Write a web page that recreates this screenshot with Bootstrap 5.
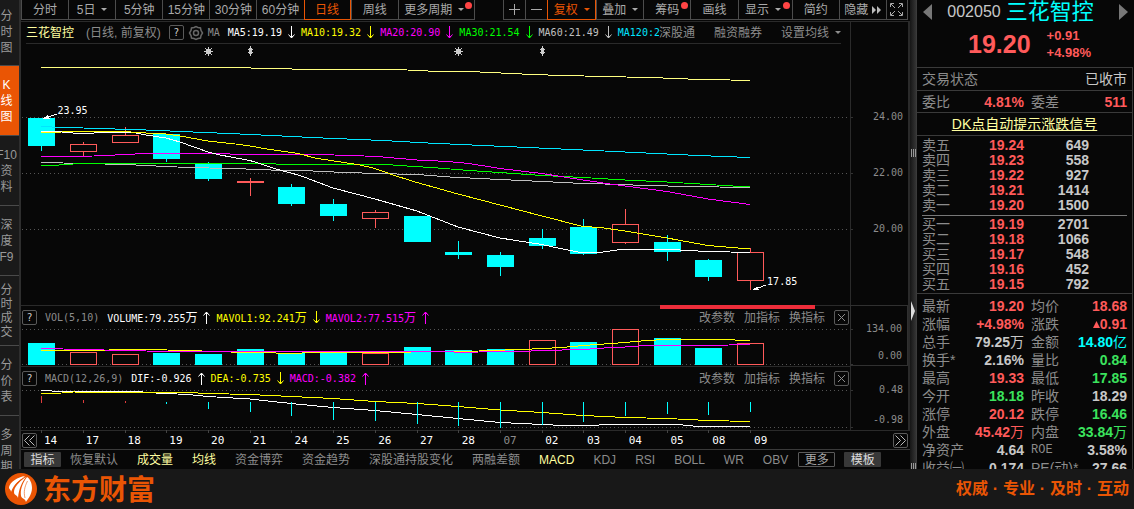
<!DOCTYPE html>
<html lang="zh-CN">
<head>
<meta charset="utf-8">
<meta name="viewport" content="width=device-width, initial-scale=1">
<title>三花智控 002050</title>
<link rel="stylesheet" href="https://cdn.jsdelivr.net/npm/bootstrap@5.3.0/dist/css/bootstrap.min.css">
<style>
:root{--ink:#070707;--line:#3a3a3a;--dim:#8c8c8c;--hot:#ea5504;--up:#ff5a5a;--down:#3be35d;--aqua:#00ffff;--pale:#ffffa0}
body{background:var(--ink);color:#c8c8c8;font-family:"Liberation Sans","Noto Sans CJK SC",sans-serif;font-size:12px;line-height:1}
.app{height:100vh}
button{background:none;border:0;padding:0;color:inherit;font:inherit;line-height:1;white-space:nowrap}
a{color:inherit}
svg{display:block;flex:none}
.mono{font-family:"DejaVu Sans Mono","Noto Sans CJK SC",monospace;font-size:10px}
.mono b{font-size:12px;font-weight:400}
.dim{color:var(--dim)}.up{color:var(--up)}.down{color:var(--down)}.aqua{color:var(--aqua)}.pale{color:var(--pale)}
.yel{color:#ff0}.mag{color:#f0f}.grn{color:#0f0}.wht{color:#fff}.gry{color:#c0c0c0}.cy2{color:#00e5ff}
/* left rail */
.rail{width:21px;background:#1a1a1a;border-right:2px solid #2e2e2e;color:#999}
.rail button{height:70px;border-bottom:1px solid #4a4a4a;padding-right:6px;line-height:16px;display:flex;flex:none;align-items:center;justify-content:center}
.rail button:first-child{height:66px;padding-bottom:2px}
.rail button.tight{line-height:14px}
.rail .on{background:var(--hot);color:#fff}
/* period bar */
.bar{height:20px;margin-bottom:1px;padding-right:2px}
.bar button{flex:1 1 47px;border:solid #4c4c4c;border-width:0 0 1px 1px;color:#aaa;display:flex;align-items:center;justify-content:center;position:relative}
.bar button.last{border-right-width:1px}
.bar button.on{border-color:var(--hot);border-right-width:1px;color:var(--hot)}
.bar button.g22{flex-basis:22px}.bar button.g49{flex-basis:49px}.bar button.g54{flex-basis:54px}.bar button.g77{flex-basis:77px}
.bar .g28{flex:1 1 28px}
.caret{border:3px solid transparent;border-top-color:currentColor;border-bottom:0;margin-left:6px}
.dot{position:absolute;right:2px;top:2px;width:7px;height:7px;border-radius:50%;background:#f44}
/* chart frames */
.frame{border-top:1px solid #2a2a2a;border-right:2px solid #2a2a2a}
.legend{margin:0 9px 0 5px;border-bottom:1px solid #2a2a2a}
.legend-space{height:22px}
.gap19{gap:19px}
.gap9{gap:9px;padding-right:1px}
.series{display:flex;align-items:center;gap:5px;margin-right:5px;flex:none}
.qbox{width:15px;height:15px;border:1px solid #5a5a5a;border-radius:2px;display:flex;align-items:center;justify-content:center;flex:none;color:#ccc}
.panel-top{height:24px;border-top:1px solid #2a2a2a;padding-left:1px}
.plot{position:relative;min-height:0}
.plot svg.draw{position:absolute;left:0;top:0;width:100%;height:100%;overflow:visible}
.h37{height:37px}.h40{height:40px}
.scale{width:58px;border-left:1px solid #2a2a2a;position:relative;color:var(--dim)}
.scale.boxed{border:1px solid #303030}
.scale span{position:absolute;right:5px;transform:translateY(-50%);white-space:nowrap}
.note{position:absolute;color:#fff;transform:translateY(-50%)}
.marker-bar{position:absolute;height:4px;background:#ed2d3a;z-index:2}
.dates{height:19px;border-top:1px solid #2a2a2a;padding:0 2px 0 1px}
.dates .run{flex:757 1 0;padding-left:7px;font-size:11px;color:#fff}
.dates .run span{flex:1 1 0}
.dates .rest{flex:98 1 0}
.tabs{height:20px;border-top:1px solid #3a3a3a;gap:19px;padding-left:3px;color:var(--dim)}
.pill{background:#383838;color:#ddd;height:15px;width:37px;border-radius:1px;margin-right:-10px}
.pill.out{background:none;border:1px solid #5a5a5a;color:#aaa;margin-left:-9px}
/* splitter */
.split{width:6px;background:linear-gradient(90deg,#161616,#343434)}
.grip{position:absolute;left:1px;top:149px;width:5px;height:8px;background:repeating-linear-gradient(90deg,#999 0 1px,transparent 1px 2px)}
.grip.low{top:463px}
.knob{position:absolute;left:1px;top:301px;border:solid transparent;border-width:10px 0 10px 4px;border-left-color:#ddd}
/* quote column */
.quote{width:218px;border-left:1px solid var(--line);font-size:14px}
.quote .code{font-size:16px;margin-right:5px}
.quote .name{font-size:22px}
.quote .price{font-size:25px;font-weight:700}
.quote .delta{font-size:13px;font-weight:700;line-height:17px}
.headbox{height:67px;padding:1px 6px 0 6px}
.ident{padding-right:10px}
.body-r{border-right:1px solid var(--line);margin-right:1px}
.qrow{border-top:1px solid var(--line);padding:0 5px;height:23px}
.qrow.h22{height:22px}
.half{width:102px;margin-right:7px}
.val{font-weight:700}
.quote table{width:100%;table-layout:fixed;border-collapse:collapse}
.quote th{font-weight:400;color:var(--dim);text-align:left;padding:0 0 0 5px;white-space:nowrap}
.quote td + th{padding-left:7px}
.quote td{font-weight:700;text-align:right;padding:0;white-space:nowrap}
.book tr{height:15px}.stats tr{height:18px}
.book-wrap{border-top:1px solid var(--line);padding:1px 0 2px}
.mid{border-top:1px solid #777;margin:3px 5px 0;height:1px}
.stats{border-top:1px solid var(--line);padding-top:3px}
.c1{width:48px}.c2{width:59px}.c3{width:65px}
.s1{width:46px}.s2{width:61px}.s3{width:46px}.s4{width:57px}
.quote th.roe{font-family:"Liberation Mono",monospace;font-size:12px}
.foot{height:40px;background:#181818;color:var(--hot);padding:0 5px;position:relative;z-index:3}
.foot .brand{font-size:28px;font-weight:700;margin-left:6px;padding-top:4px}
.foot .motto{font-size:16px;font-weight:700}
.foot .motto i{font-style:normal;display:inline-block;width:15px;text-align:center}
</style>
</head>
<body>
<svg width="0" height="0" class="position-absolute" aria-hidden="true">
  <symbol id="dn" viewBox="0 0 9 13"><path d="M4.500 0V12M1.500 8.500L4.500 12L7.500 8.500M3 10.500H6" fill="none" stroke="currentColor"/></symbol>
  <symbol id="ua" viewBox="0 0 9 13"><path d="M4.500 13V1M1.500 4.500L4.500 1L7.500 4.500M3 2.500H6" fill="none" stroke="currentColor"/></symbol>
</svg>
<div class="app d-flex flex-column overflow-hidden">
  <main class="d-flex flex-fill overflow-hidden" style="min-height:0">
    <nav class="rail d-flex flex-column flex-shrink-0 overflow-hidden">
      <button>分<br>时<br>图</button>
      <button class="on">K<br>线<br>图</button>
      <button>F10<br>资<br>料</button>
      <button>深<br>度<br>F9</button>
      <button class="tight">分<br>时<br>成<br>交</button>
      <button>分<br>价<br>表</button>
      <button>多<br>周<br>期</button>
    </nav>

    <section class="d-flex flex-column flex-fill" style="min-width:0">
      <div class="bar d-flex">
        <button>分时</button><button>5日<span class="caret"></span></button><button>5分钟</button><button>15分钟</button><button>30分钟</button><button>60分钟</button><button class="on">日线</button><button>周线</button>
        <button class="g77 last">更多周期<span class="caret me-1"></span><span class="dot"></span></button>
        <div class="g28"></div>
        <button class="g22" aria-label="放大"><svg width="11" height="11"><path d="M0 5.500H11M5.500 0V11" stroke="#aaa"/></svg></button>
        <button class="g22" aria-label="缩小"><svg width="11" height="11"><path d="M0 5.500H11" stroke="#aaa"/></svg></button>
        <button class="g49 on">复权<span class="caret"></span></button>
        <button>叠加<span class="caret"></span></button>
        <button>筹码<span class="dot"></span></button>
        <button>画线</button>
        <button class="g54">显示<span class="caret me-1"></span><span class="dot"></span></button>
        <button>简约</button>
        <button>隐藏<svg class="ms-1" width="9" height="8"><path d="M0 0L4 4L0 8ZM5 0L9 4L5 8Z" fill="#bbb"/></svg></button>
        <button class="g22 last" aria-label="全屏"><svg width="13" height="13"><path d="M.5 4V.5H4M9 .5H12.500V4M12.500 9V12.500H9M4 12.500H.5V9M1 1L5 5M12 1L8 5M12 12L8 8M1 12L5 8" fill="none" stroke="#aaa"/></svg></button>
      </div>

      <div class="frame d-flex flex-fill" style="min-height:0">
        <div class="d-flex flex-column flex-fill" style="min-width:0">
          <div class="legend legend-space d-flex align-items-center">
            <div class="d-flex align-items-center flex-fill overflow-hidden text-nowrap" style="min-width:0">
              <span class="pale flex-shrink-0 me-2">三花智控</span>
              <span class="dim flex-shrink-0 ms-1 me-1">(日线, 前复权)</span>
              <button class="qbox mono ms-1">?</button>
              <svg class="mx-1" width="16" height="16" viewBox="0 0 16 16" fill="none" stroke="#666" stroke-width="1.500"><path d="M6 2.500L8 1.500L10 2.500L12.500 3L13 5.500L14.500 8L13 10.500L12.500 13L10 13.500L8 14.500L6 13.500L3.500 13L3 10.500L1.500 8L3 5.500L3.500 3Z"/><circle cx="8" cy="8" r="2.500"/></svg>
              <span class="mono dim me-2 flex-shrink-0">MA</span>
              <span class="series mono wht">MA5:19.19<svg width="9" height="13"><use href="#dn"/></svg></span>
              <span class="series mono yel">MA10:19.32<svg width="9" height="13"><use href="#dn"/></svg></span>
              <span class="series mono mag">MA20:20.90<svg width="9" height="13"><use href="#dn"/></svg></span>
              <span class="series mono grn">MA30:21.54<svg width="9" height="13"><use href="#dn"/></svg></span>
              <span class="series mono gry">MA60:21.49<svg width="9" height="13"><use href="#dn"/></svg></span>
              <span class="series mono cy2">MA120:2</span>
            </div>
            <div class="d-flex gap19 dim flex-shrink-0"><button>深股通</button><button>融资融券</button><button class="d-flex align-items-center">设置均线<span class="caret"></span></button></div>
          </div>
          <div class="plot flex-fill">
            <svg class="draw" id="price" viewBox="21 44 829 261" preserveAspectRatio="none"></svg>
            <span class="note mono" style="left:4.4%;top:25.600%">23.95</span>
            <span class="note mono" style="left:90%;top:91.200%">17.85</span>
            <div class="marker-bar" style="left:77.100%;width:18.700%;top:100%"></div>
          </div>
        </div>
        <div class="d-flex flex-column"><div class="scale legend-space"></div><div class="scale mono flex-fill" data-top="44" data-h="261" data-ticks="24.00@117,22.00@173,20.00@229"></div></div>
      </div>

      <div class="d-flex frame border-top-0">
        <div class="flex-fill" style="min-width:0">
          <div class="panel-top d-flex align-items-center">
            <button class="qbox mono me-1">?</button>
            <span class="mono dim ms-1 me-2">VOL(5,10)</span>
            <span class="series mono wht"><span>VOLUME:79.255<b>万</b></span><svg width="9" height="13"><use href="#ua"/></svg></span>
            <span class="series mono yel"><span>MAVOL1:92.241<b>万</b></span><svg width="9" height="13"><use href="#dn"/></svg></span>
            <span class="series mono mag"><span>MAVOL2:77.515<b>万</b></span><svg width="9" height="13"><use href="#ua"/></svg></span>
            <div class="d-flex align-items-center dim gap9 ms-auto"><button>改参数</button><button>加指标</button><button>换指标</button><button class="qbox" aria-label="关闭"><svg width="9" height="9"><path d="M1 1L8 8M8 1L1 8" stroke="#8c8c8c"/></svg></button></div>
          </div>
          <div class="plot h37"><svg class="draw" id="vol" viewBox="21 329 829 37" preserveAspectRatio="none"></svg></div>
        </div>
        <div class="scale boxed mono" data-top="305" data-h="61" data-ticks="134.00@329,0.00@357"></div>
      </div>

      <div class="d-flex frame border-top-0">
        <div class="flex-fill" style="min-width:0">
          <div class="panel-top d-flex align-items-center">
            <button class="qbox mono me-1">?</button>
            <span class="mono dim ms-1 me-2">MACD(12,26,9)</span>
            <span class="series mono wht">DIF:-0.926<svg width="9" height="13"><use href="#ua"/></svg></span>
            <span class="series mono yel">DEA:-0.735<svg width="9" height="13"><use href="#dn"/></svg></span>
            <span class="series mono mag">MACD:-0.382<svg width="9" height="13"><use href="#ua"/></svg></span>
            <div class="d-flex align-items-center dim gap9 ms-auto"><button>改参数</button><button>加指标</button><button>换指标</button><button class="qbox" aria-label="关闭"><svg width="9" height="9"><path d="M1 1L8 8M8 1L1 8" stroke="#8c8c8c"/></svg></button></div>
          </div>
          <div class="plot h40"><svg class="draw" id="macd" viewBox="21 390 829 40" preserveAspectRatio="none"></svg></div>
        </div>
        <div class="scale mono" data-top="366" data-h="64" data-ticks="0.48@390,-0.98@420"></div>
      </div>

      <div class="dates d-flex align-items-center">
        <button class="qbox" aria-label="向前"><svg width="11" height="11"><path d="M5.500 .5L.5 5.500L5.500 10.500M10.500 .5L5.500 5.500L10.500 10.500" fill="none" stroke="#bbb"/></svg></button>
        <div class="run mono d-flex" id="days"></div><div class="rest"></div>
        <button class="qbox" aria-label="向后"><svg width="11" height="11"><path d="M.5 .5L5.500 5.500L.5 10.500M5.500 .5L10.500 5.500L5.500 10.500" fill="none" stroke="#bbb"/></svg></button>
      </div>
      <div class="tabs d-flex align-items-center">
        <button class="pill">指标</button><button>恢复默认</button><button class="pale">成交量</button><button class="pale">均线</button><button>资金博弈</button><button>资金趋势</button><button>深股通持股变化</button><button>两融差额</button><button class="pale">MACD</button><button>KDJ</button><button>RSI</button><button>BOLL</button><button>WR</button><button>OBV</button><button class="pill out">更多</button><button class="pill">模板</button>
      </div>
    </section>

    <div class="split flex-shrink-0 position-relative"><span class="grip"></span><span class="knob"></span><span class="grip low"></span></div>

    <aside class="quote flex-shrink-0 overflow-hidden">
      <div class="headbox">
        <div class="d-flex align-items-center">
          <button aria-label="上一只"><svg width="9" height="16"><path d="M9 0V16L0 8Z" fill="#777"/></svg></button>
          <div class="ident d-flex align-items-center mx-auto"><span class="code">002050</span><span class="name aqua">三花智控</span></div>
          <button aria-label="下一只"><svg width="9" height="16"><path d="M0 0V16L9 8Z" fill="#777"/></svg></button>
        </div>
        <div class="d-flex align-items-center justify-content-center up pt-1 ps-2"><span class="price me-3">19.20</span><span class="delta">+0.91<br>+4.98%</span></div>
      </div>
      <div class="body-r">
        <div class="qrow d-flex align-items-center"><span class="dim">交易状态</span><span class="ms-auto">已收市</span></div>
        <div class="qrow h22 d-flex align-items-center"><div class="half d-flex justify-content-between"><span class="dim">委比</span><span class="val up">4.81%</span></div><span class="dim">委差</span><span class="val up ms-auto">511</span></div>
        <div class="qrow d-flex align-items-center justify-content-center"><a href="#" class="pale">DK点自动提示涨跌信号</a></div>
        <div class="book-wrap">
          <table class="book"><colgroup><col class="c1"><col class="c2"><col class="c3"><col></colgroup>
            <tr><th>卖五</th><td class="up">19.24</td><td>649</td><td></td></tr>
            <tr><th>卖四</th><td class="up">19.23</td><td>558</td><td></td></tr>
            <tr><th>卖三</th><td class="up">19.22</td><td>927</td><td></td></tr>
            <tr><th>卖二</th><td class="up">19.21</td><td>1414</td><td></td></tr>
            <tr><th>卖一</th><td class="up">19.20</td><td>1500</td><td></td></tr>
          </table>
          <div class="mid"></div>
          <table class="book"><colgroup><col class="c1"><col class="c2"><col class="c3"><col></colgroup>
            <tr><th>买一</th><td class="up">19.19</td><td>2701</td><td></td></tr>
            <tr><th>买二</th><td class="up">19.18</td><td>1066</td><td></td></tr>
            <tr><th>买三</th><td class="up">19.17</td><td>548</td><td></td></tr>
            <tr><th>买四</th><td class="up">19.16</td><td>452</td><td></td></tr>
            <tr><th>买五</th><td class="up">19.15</td><td>792</td><td></td></tr>
          </table>
        </div>
        <div class="stats">
          <table><colgroup><col class="s1"><col class="s2"><col class="s3"><col class="s4"><col></colgroup>
            <tr><th>最新</th><td class="up">19.20</td><th>均价</th><td class="up">18.68</td><td></td></tr>
            <tr><th>涨幅</th><td class="up">+4.98%</td><th>涨跌</th><td class="up"><svg class="d-inline-block" width="7" height="8"><path d="M3.500 0L7 7H0Z" fill="currentColor"/></svg>0.91</td><td></td></tr>
            <tr><th>总手</th><td>79.25<span class="fw-normal">万</span></td><th>金额</th><td class="aqua">14.80<span class="fw-normal">亿</span></td><td></td></tr>
            <tr><th>换手*</th><td>2.16%</td><th>量比</th><td class="down">0.84</td><td></td></tr>
            <tr><th>最高</th><td class="up">19.33</td><th>最低</th><td class="down">17.85</td><td></td></tr>
            <tr><th>今开</th><td class="down">18.18</td><th>昨收</th><td>18.29</td><td></td></tr>
            <tr><th>涨停</th><td class="up">20.12</td><th>跌停</th><td class="down">16.46</td><td></td></tr>
            <tr><th>外盘</th><td class="up">45.42<span class="fw-normal">万</span></td><th>内盘</th><td class="down">33.84<span class="fw-normal">万</span></td><td></td></tr>
            <tr><th>净资产</th><td>4.64</td><th class="roe">ROE</th><td>3.58%</td><td></td></tr>
            <tr><th>收益㈠</th><td>0.174</td><th>PE(动)*</th><td>27.66</td><td></td></tr>
          </table>
        </div>
      </div>
    </aside>
  </main>

  <footer class="foot d-flex align-items-center justify-content-between flex-shrink-0">
    <div class="d-flex align-items-center">
      <svg width="32" height="32" viewBox="0 0 32 32"><circle cx="16" cy="16" r="16" fill="#ea5504"/><g fill="#fff"><path d="M20 3C13 4 5 9 4 14C4 17 6 16 6 19C9 11 14 7 20 3Z"/><path d="M21 4C14 9 9 14 9 19C9 23 12 21 13 25C14 15 17 9 21 4Z"/><path d="M22 4C17 11 15 17 16 23C17 26 20 25 21 29C22 27 27 22 27 15C27 10 25 6 22 4Z"/><path d="M20 3.500C12 6 6 11 6.500 16C8 12 14 7 20 3.500ZM21 4C15 8 11 13 11 18C13 12 17 8 21 4Z"/></g><path d="M22.500 8C19.500 14 18.500 19 20 25" stroke="#ea5504" stroke-width=".6" fill="none"/></svg>
      <span class="brand">东方财富</span>
    </div>
    <span class="motto">权威<i>·</i>专业<i>·</i>及时<i>·</i>互动</span>
  </footer>
</div>
<script src="https://cdn.jsdelivr.net/npm/bootstrap@5.3.0/dist/js/bootstrap.bundle.min.js"></script>
<script>
const X=[41,83,125,166,208,250,291,333,375,417,458,500,542,583,625,667,708,750];
const CY='#00ffff', RD='#ff5a5a';
const box=(x,t,b,up)=>up
  ?`<rect x="${x-12.5}" y="${t+.5}" width="26" height="${Math.max(b-t-1,1)}" fill="#070707" stroke="${RD}"/>`
  :`<rect x="${x-13}" y="${t}" width="27" height="${b-t}" fill="${CY}"/>`;
const stem=(x,t,b,c)=>b>t?`<rect x="${x}" y="${t}" width="1" height="${b-t}" fill="${c}"/>`:'';
const line=(pts,c)=>`<polyline points="${pts}" fill="none" stroke="${c}"/>`;
const dots=y=>`<path d="M22 ${y}.5H848" stroke="#555" stroke-dasharray="1 3"/><path d="M850 ${y}.5h3" stroke="#333"/>`;
const put=(id,s)=>document.getElementById(id).innerHTML=`<g shape-rendering="crispEdges">${s}</g>`;

// high, body top, body bottom, low, rising
const K=[[118,118,146,151,0],[142,144,152,156,1],[127,135,143,143,1],[134,134,159,162,0],[162,164,179,181,0],[178,181,183,196,1],[184,187,204,206,0],[199,204,216,221,0],[210,212,219,228,1],[216,216,242,242,0],[241,252,255,259,0],[252,255,267,276,0],[229,238,246,249,0],[219,227,254,255,0],[209,224,243,244,1],[235,242,252,261,0],[259,260,277,281,0],[248,252,281,290,1]];
let s=dots(117)+dots(173)+dots(229);
K.forEach((k,i)=>{const c=k[4]?RD:CY;s+=stem(X[i],k[0],k[1],c)+box(X[i],k[1],k[2],k[4])+stem(X[i],k[2],k[3],c)});
s+=line('41,67.5 230,67.5 313,69.5 397,69.5 438,71.5 480,72 511,73.5 532,74.5 563,75.5 605,76.5 647,77.5 678,78.5 698,79.5 730,80 750,80.5','#ffff80');
s+=line('41,126.5 52,127 146,130 240,134 323,138 383,140.5 428,143 594,150.5 698,155.5 750,157.5','#00e5ff');
s+=line('41,162 63,163 105,164 136,165 156,166 188,167.5 230,168.5 261,169.5 281,170.5 313,171 344,172.5 397,174 424,175 450,177 490,179 532,181 573,183 605,184 647,185.5 688,186.5 750,187.5','#c0c0c0');
s+=line('41,166 52,165.5 73,164 104,163.5 271,163.5 281,164.5 386,164.5 407,166 438,168 469,170.5 500,172.5 542,175.5 583,177.5 625,180 667,182 708,184.5 750,187','#0f0');
s+=line('41,156.5 94,156 115,155 146,153.5 313,154.5 355,155.5 383,157 417,160 448,161.5 469,163.5 500,168.5 542,173.5 583,180 610,184 625,186 667,191.5 708,199 750,204.5','#f0f');
s+=line('41,131.5 62,132 73,133 94,133 125,132 136,133 146,135 166,138 180,142 208,152 220,155 250,160.5 276,169 300,175.5 333,188 375,199 417,211 458,227 500,238 542,244.5 553,247 583,253 600,252.5 620,249.5 667,249.5 680,250 698,251 730,252 750,252.5','#fff');
s+=line('41,132.5 62,132 125,131.5 136,132.5 166,134 180,136 208,141 240,144.5 250,146 270,149.5 298,153.5 315,158 360,165 375,168.5 396,176 417,182.5 458,194 500,205 542,216 583,226.5 600,227.5 625,231 667,238 708,245.5 750,249','#ff0');
[208,458].forEach(x=>s+=`<path d="M${x+.5} 47V56M${x-4} 51.5H${x+5}M${x-3} 48L${x+4} 55M${x+4} 48L${x-3} 55" stroke="#ccc"/><rect x="${x-2}" y="49" width="5" height="5" fill="#ccc"/>`);
[250,542].forEach(x=>s+=`<path d="M${x+.5} 46L${x+3} 50H${x+2}V52H${x+3}L${x+.5} 56L${x-2} 52H${x-1}V50H${x-2}Z" fill="#ccc"/>`);
s+='<path d="M57 114L46 117.5M766 285L754 289.5" stroke="#fff"/><path d="M43 118.500L48 115L50 118.500ZM751 290.500L757 286.500L759 290Z" fill="#fff"/>';
put('price',s);

// bar top, rising
const V=[[343,0],[352,1],[354,1],[353,0],[354,0],[349,0],[353,0],[352,0],[353,1],[347,0],[350,0],[349,0],[340,1],[342,0],[329,1],[338,0],[348,0],[343,1]];
s=dots(329)+dots(364);
V.forEach((v,i)=>s+=box(X[i],v[0],365,v[1]));
s+=line('41,350.5 104,350.5 115,349.5 146,349.5 188,350.5 230,352 260,352.5 291,353.5 313,352.5 385,352.5 438,351.5 479,351 505,350 532,349 562,347.5 583,345.5 604,344 625,342.5 646,340.5 667,339.5 720,339.5 750,340.5','#ff0');
s+=line('41,348.5 63,349 104,350 146,351 180,351.5 450,351.5 458,352.5 479,352 521,351.5 542,350.5 583,349.5 604,348 625,347 646,345.5 687,345.5 729,345 740,344 750,344','#f0f');
put('vol',s);

const M=[[396,403],[400,403],[401,403],[402,404],[402,409],[402,412],[402,416],[402,420],[402,421],[402,424],[402,426],[402,428],[402,425],[402,422],[402,416],[402,414],[402,415],[402,412]];
s=dots(390)+dots(427);
s+=line('41,390.5 63,391.5 136,391.5 156,393 188,394.5 208,396.5 250,399 291,403.5 333,407.5 375,410.5 417,414.5 458,418.5 500,422.5 542,424.5 563,425.5 594,425.5 604,424.5 678,424.5 698,426.5 750,426.5','#fff');
s+=line('41,393.5 62,393 73,392 136,392.5 188,392.5 208,393.5 250,394.5 291,396.5 333,398.5 375,401.5 417,403.5 458,406.5 500,410 542,412.5 583,415.5 625,417.5 667,418.5 708,420.5 750,421.5','#ff0');
M.forEach((m,i)=>s+=stem(X[i],m[0],m[1],i<3?'#e03c3c':CY)+stem(X[i],430,433,'#444'));
put('macd',s);

document.getElementById('days').innerHTML='14,17,18,19,20,21,24,25,26,27,28,07,02,03,04,05,08,09'.split(',').map(d=>`<span${d==='07'?' class="dim"':''}>${d}</span>`).join('');
document.querySelectorAll('[data-ticks]').forEach(el=>{
  el.innerHTML=el.dataset.ticks.split(',').map(t=>{const [v,y]=t.split('@');return `<span style="top:${(y-el.dataset.top)/el.dataset.h*100}%">${v}</span>`}).join('');
});
</script>
</body>
</html>
